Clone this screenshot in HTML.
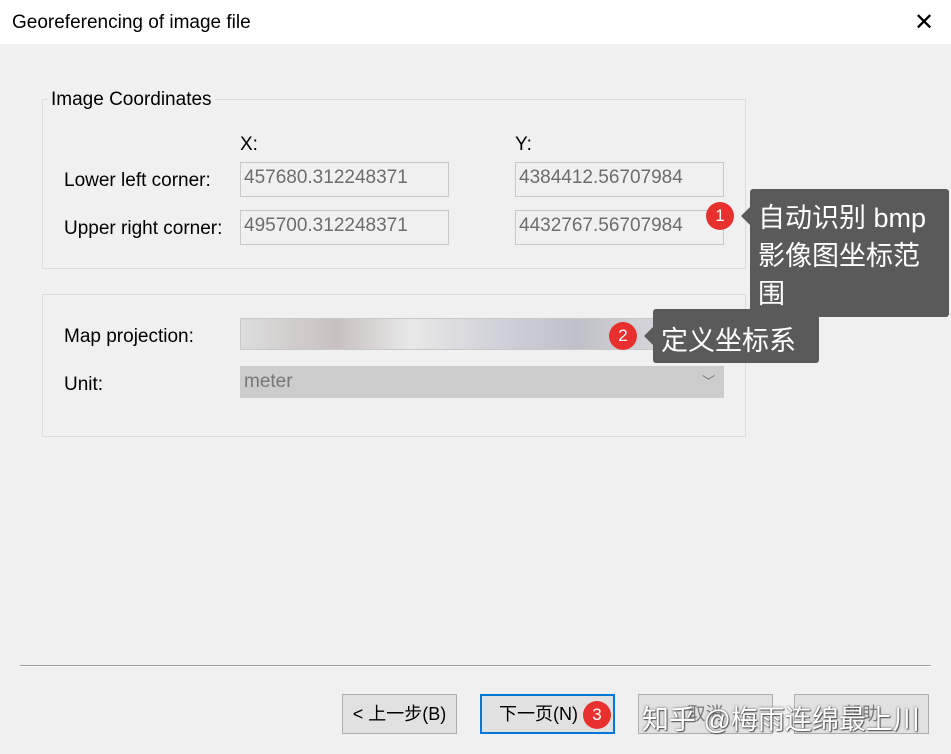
<!DOCTYPE html>
<html><head><meta charset="utf-8"><style>
body{margin:0;width:951px;height:754px;background:#f0f0f0;position:relative;overflow:hidden;font-family:"Liberation Sans","Noto Sans CJK SC",sans-serif;color:#000}
.a{position:absolute}
.title{left:0;top:0;width:951px;height:44px;background:#fff}
.grp{border:1px solid #dcdcdc}
.lbl{font-size:19px}
.inp{background:#f0f0f0;border:1px solid #c8c8c8;color:#6d6d6d;font-size:19px;box-sizing:border-box;padding:4px 0 0 3px}
.btn{border:1px solid #adadad;background:#e1e1e1;box-sizing:border-box;font-size:18px;text-align:center;line-height:38px}
.tip{background:#5a5a5a;color:#fff;font-size:27px;border-radius:3px;white-space:nowrap}
.dot{width:28px;height:28px;border-radius:50%;background:#e8302f;color:#fff;font-size:17px;text-align:center;line-height:28px}
.ar{width:0;height:0;border-top:9px solid transparent;border-bottom:9px solid transparent;border-right:9px solid #5a5a5a}
</style></head><body>
<div class="a title"></div>
<div class="a" style="left:12px;top:12px;font-size:19px">Georeferencing of image file</div>
<div class="a" style="left:914px;top:8px;font-size:24px;font-weight:300">✕</div>
<div class="a grp" style="left:42px;top:99px;width:702px;height:168px"></div>
<div class="a lbl" style="left:48px;top:89px;background:#f0f0f0;padding:0 3px">Image Coordinates</div>
<div class="a lbl" style="left:240px;top:134px">X:</div>
<div class="a lbl" style="left:515px;top:134px">Y:</div>
<div class="a lbl" style="left:64px;top:170px">Lower left corner:</div>
<div class="a lbl" style="left:64px;top:218px">Upper right corner:</div>
<div class="a inp" style="left:240px;top:162px;width:209px;height:35px">457680.312248371</div>
<div class="a inp" style="left:515px;top:162px;width:209px;height:35px">4384412.56707984</div>
<div class="a inp" style="left:240px;top:210px;width:209px;height:35px">495700.312248371</div>
<div class="a inp" style="left:515px;top:210px;width:209px;height:35px">4432767.56707984</div>
<div class="a grp" style="left:42px;top:294px;width:702px;height:141px"></div>
<div class="a lbl" style="left:64px;top:326px">Map projection:</div>
<div class="a lbl" style="left:64px;top:374px">Unit:</div>
<div class="a inp" style="left:240px;top:318px;width:484px;height:32px;background:linear-gradient(90deg,#ddd,#c8c0c0 20%,#e8e8e8 35%,#cfcfd8 55%,#c0c0c8 70%,#e8e8e8)"></div>
<div class="a inp" style="left:240px;top:366px;width:484px;height:32px;background:#ccc;border-color:#ccc;color:#777">meter<span style="position:absolute;right:8px;top:4px;font-size:13px">﹀</span></div>
<div class="a" style="left:20px;top:665px;width:911px;height:1px;background:#a0a0a0"></div>
<div class="a" style="left:20px;top:666px;width:911px;height:1px;background:#fff"></div>
<div class="a btn" style="left:342px;top:694px;width:115px;height:40px">&lt; 上一步(B)</div>
<div class="a btn" style="left:480px;top:694px;width:135px;height:40px;border:2px solid #0078d7;text-align:left;padding-left:17px;line-height:36px">下一页(N)</div>
<div class="a btn" style="left:638px;top:694px;width:135px;height:40px;color:#777">取消</div>
<div class="a btn" style="left:794px;top:694px;width:135px;height:40px;color:#777">帮助</div>
<div class="a" style="left:642px;top:698px;font-size:27px;color:#fff;text-shadow:0 0 2px #555,1px 1px 1px #555">知乎 @梅雨连绵最上川</div>
<div class="a dot" style="left:583px;top:701px">3</div>
<div class="a tip" style="left:750px;top:189px;width:199px;height:128px;padding:10px 0 0 8px;box-sizing:border-box;line-height:38px">自动识别 bmp<br>影像图坐标范<br>围</div>
<div class="a ar" style="left:741px;top:207px"></div>
<div class="a dot" style="left:706px;top:202px">1</div>
<div class="a tip" style="left:653px;top:309px;width:166px;height:54px;padding:10px 0 0 8px;box-sizing:border-box">定义坐标系</div>
<div class="a ar" style="left:644px;top:327px"></div>
<div class="a dot" style="left:609px;top:322px">2</div>
</body></html>
